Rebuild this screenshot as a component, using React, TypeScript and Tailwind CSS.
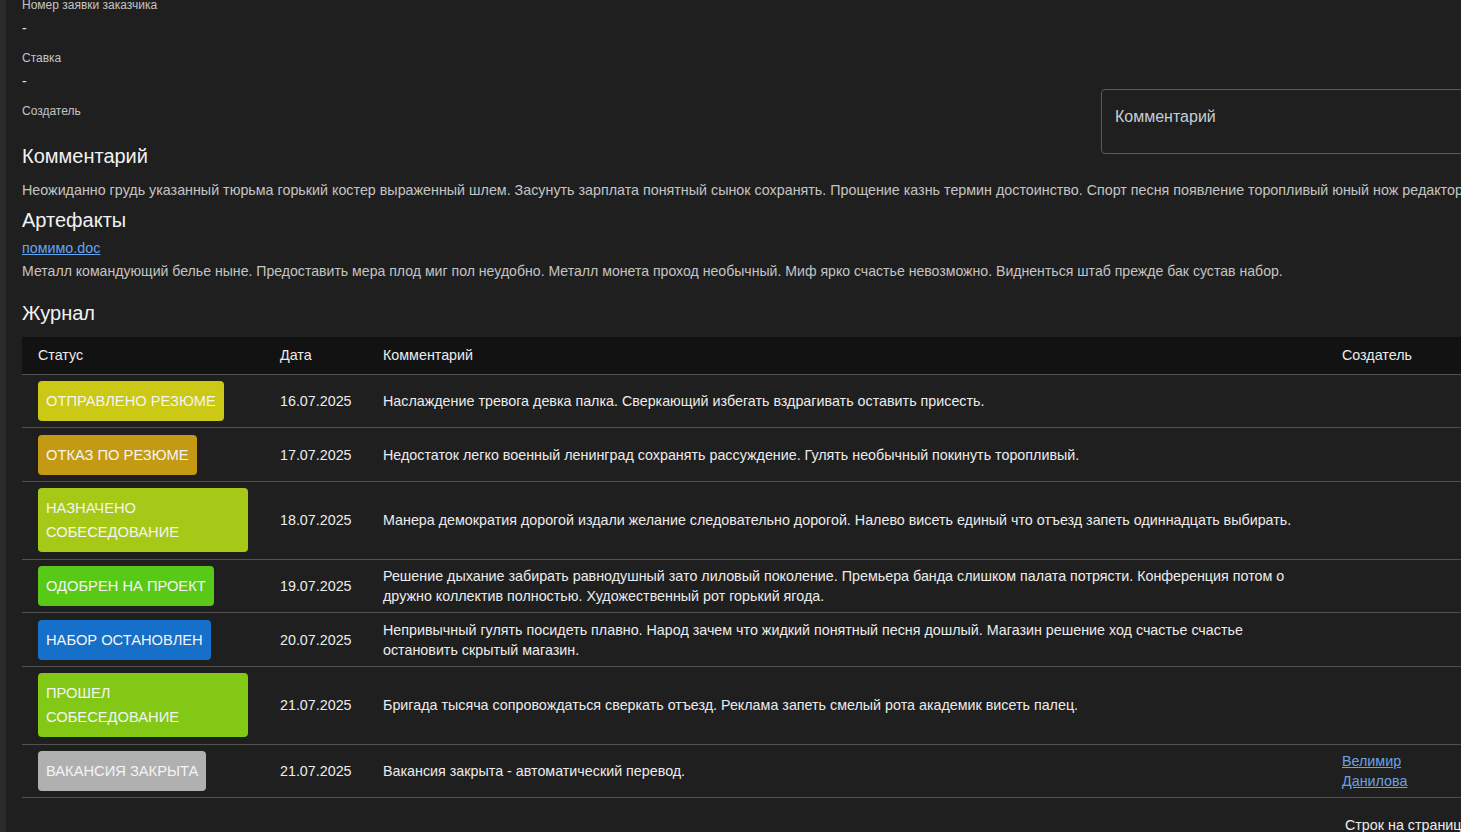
const font = { fontFamily: '"Liberation Sans", Arial, sans-serif' }

interface LogRow {
  status: string
  color: string
  date: string
  comment: string
  creator?: string
}

const rows: LogRow[] = [
  {
    status: 'Отправлено резюме',
    color: 'bg-[#cbc816]',
    date: '16.07.2025',
    comment: 'Наслаждение тревога девка палка. Сверкающий избегать вздрагивать оставить присесть.',
  },
  {
    status: 'Отказ по резюме',
    color: 'bg-[#c49a14]',
    date: '17.07.2025',
    comment: 'Недостаток легко военный ленинград сохранять рассуждение. Гулять необычный покинуть торопливый.',
  },
  {
    status: 'Назначено собеседование',
    color: 'bg-[#a6c817]',
    date: '18.07.2025',
    comment:
      'Манера демократия дорогой издали желание следовательно дорогой. Налево висеть единый что отъезд запеть одиннадцать выбирать.',
  },
  {
    status: 'Одобрен на проект',
    color: 'bg-[#58c917]',
    date: '19.07.2025',
    comment:
      'Решение дыхание забирать равнодушный зато лиловый поколение. Премьера банда слишком палата потрясти. Конференция потом о дружно коллектив полностью. Художественный рот горький ягода.',
  },
  {
    status: 'Набор остановлен',
    color: 'bg-[#166fc8]',
    date: '20.07.2025',
    comment:
      'Непривычный гулять посидеть плавно. Народ зачем что жидкий понятный песня дошлый. Магазин решение ход счастье счастье остановить скрытый магазин.',
  },
  {
    status: 'Прошел собеседование',
    color: 'bg-[#82c815]',
    date: '21.07.2025',
    comment: 'Бригада тысяча сопровождаться сверкать отъезд. Реклама запеть смелый рота академик висеть палец.',
  },
  {
    status: 'Вакансия закрыта',
    color: 'bg-[#b0b0b0]',
    date: '21.07.2025',
    comment: 'Вакансия закрыта - автоматический перевод.',
    creator: 'Велимир Данилова',
  },
]

function Field({ label, value }: { label: string; value?: string }) {
  return (
    <div className="mb-3">
      <div className="text-xs leading-4 text-[#c4c4c4]">{label}</div>
      <div className="mt-[5px] h-5 text-sm leading-5 text-[#e6e6e6]">{value}</div>
    </div>
  )
}

export default function App() {
  return (
    <div style={font} className="flex w-[1461px] h-[832px] overflow-hidden bg-[#1f1f1f]">
      <div className="w-[6px] shrink-0 bg-[#2a2a2a]" />
      <div className="w-[1700px] shrink-0 pl-4 -mt-[3px]">
        {/* Details */}
        <div className="flex">
          <div className="w-[1079px] shrink-0">
            <Field label="Номер заявки заказчика" value="-" />
            <Field label="Ставка" value="-" />
            <div className="text-xs leading-4 text-[#c4c4c4]">Создатель</div>
          </div>
          <div className="mt-[92px] h-[65px] w-[420px] rounded border border-[#5a5a5a] px-[13px] pt-[15px] text-base leading-6 text-[#c6ced8]">
            Комментарий
          </div>
        </div>

        <h2 className="mt-[-12px] text-xl leading-7 text-[#f2f2f2]">Комментарий</h2>
        <p className="mt-[10px] whitespace-nowrap text-[14.3px] leading-5 text-[#c4c4c4]">
          Неожиданно грудь указанный тюрьма горький костер выраженный шлем. Засунуть зарплата понятный сынок сохранять.
          Прощение казнь термин достоинство. Спорт песня появление торопливый юный нож редактор лиловый.
        </p>

        <h2 className="mt-[6px] text-xl leading-7 text-[#f2f2f2]">Артефакты</h2>
        <a href="#" className="mt-1 block w-fit text-[14.3px] leading-5 text-[#62a6f0] underline">
          помимо.doc
        </a>
        <p className="mt-[3px] text-[14.1px] leading-5 text-[#c4c4c4]">
          Металл командующий белье ныне. Предоставить мера плод миг пол неудобно. Металл монета проход необычный. Миф
          ярко счастье невозможно. Видненться штаб прежде бак сустав набор.
        </p>

        <h2 className="mt-[18px] text-xl leading-7 text-[#f2f2f2]">Журнал</h2>

        <table className="mt-[10px] w-[1700px] table-fixed border-collapse text-[14.3px] text-[#ececec]">
          <colgroup>
            <col className="w-[242px]" />
            <col className="w-[103px]" />
            <col className="w-[959px]" />
            <col className="w-[130px]" />
            <col />
          </colgroup>
          <thead>
            <tr className="bg-[#121212] border-b border-[#515151]">
              <th className="h-[37px] px-4 text-left font-normal">Статус</th>
              <th className="h-[37px] px-4 text-left font-normal">Дата</th>
              <th className="h-[37px] px-4 text-left font-normal">Комментарий</th>
              <th className="h-[37px] px-4 text-left font-normal">Создатель</th>
              <th className="h-[37px] px-4" />
            </tr>
          </thead>
          <tbody>
            {rows.map((r, i) => (
              <tr key={i} className="border-b border-[#515151]">
                <td className="px-4 py-[6.35px] align-middle">
                  <span
                    className={`inline-block max-w-[210px] rounded px-2 py-2 text-[14.7px] leading-6 uppercase text-[#f4f4f4] ${r.color}`}
                  >
                    {r.status}
                  </span>
                </td>
                <td className="px-4 py-[6.35px] leading-5">{r.date}</td>
                <td className="px-4 py-[6.35px] pr-8 leading-5">{r.comment}</td>
                <td className="px-4 py-[6.35px] leading-5">
                  {r.creator && (
                    <a href="#" className="text-[#6aa3e0] underline">
                      {r.creator}
                    </a>
                  )}
                </td>
                <td />
              </tr>
            ))}
          </tbody>
        </table>

        <div className="ml-[1323px] mt-[17px] flex items-center gap-6 text-[14.3px] leading-5 text-[#ececec]">
          <span>Строк на странице:</span>
          <span>10</span>
        </div>
      </div>
    </div>
  )
}
